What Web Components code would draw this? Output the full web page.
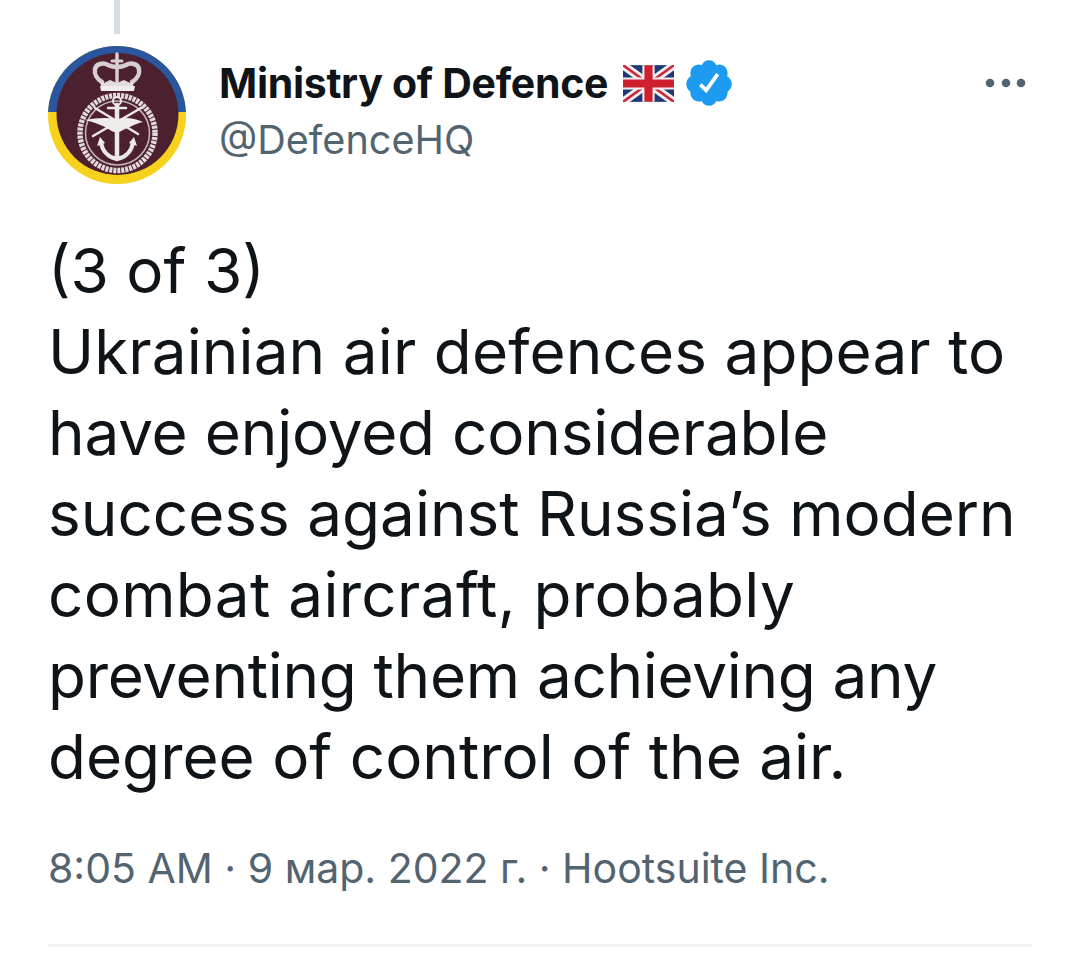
<!DOCTYPE html>
<html>
<head>
<meta charset="utf-8">
<style>
html, body { margin: 0; background: #fff; }
body { font-family: Inter, "Liberation Sans", sans-serif; color: #0f1419; width: 1080px; height: 957px; overflow: hidden; }
</style>
</head>
<body>
<tweet-card>
  <tweet-header name="Ministry of Defence" handle="@DefenceHQ"></tweet-header>
  <tweet-text>
    <tweet-line>(3 of 3)</tweet-line>
    <tweet-line fit="0.1">Ukrainian air defences appear to</tweet-line>
    <tweet-line fit="-0.2">have enjoyed considerable</tweet-line>
    <tweet-line>success against Russia’s modern</tweet-line>
    <tweet-line fit="0.32">combat aircraft, probably</tweet-line>
    <tweet-line fit="-0.31">preventing them achieving any</tweet-line>
    <tweet-line>degree of control of the air.</tweet-line>
  </tweet-text>
  <tweet-meta>8:05 AM · 9 мар. 2022 г. · Hootsuite Inc.</tweet-meta>
</tweet-card>
<script>
class TweetCard extends HTMLElement {
    constructor(){
        super();
        this.attachShadow({ mode: 'open' });
        this.shadowRoot.innerHTML = `
            <style>
                :host { display: block; padding: 0 48px; }
                .thread { width: 6px; height: 34px; background: #d6dee3; margin-left: 66px; }
                .rule { height: 3px; background: #eff3f4; margin-top: 51px; }
            </style>
            <div class="thread"></div>
            <slot></slot>
            <div class="rule"></div>
        `;
    }
}

class TweetHeader extends HTMLElement {
    connectedCallback(){
        this.attachShadow({ mode: 'open' });
        this.shadowRoot.innerHTML = `
            <style>
                :host { display: flex; align-items: flex-start; margin-top: 12px; height: 138px; }
                .avatar { width: 138px; height: 138px; flex: none; display: block; }
                .who { margin-left: 33px; flex: 1; padding-top: 12px; }
                .line { display: flex; align-items: center; height: 50px; }
                .name { font-size: 41px; font-weight: 700; letter-spacing: -0.3px; white-space: nowrap; }
                .flag { width: 51px; height: 37px; margin-left: 15px; display: block; }
                .badge { width: 52px; height: 52px; margin-left: 9px; display: block; }
                .handle { font-size: 39.6px; color: #536471; height: 48px; line-height: 48px; margin-top: 8px; }
                .more { width: 48px; height: 10px; flex: none; margin-top: 32px; display: block; }
            </style>
            <svg class="avatar" viewBox="0 0 138 138">
                <defs><clipPath id="top"><rect width="138" height="66"/></clipPath></defs>
                <circle cx="69" cy="69" r="69" fill="#f6d21c"/>
                <circle cx="69" cy="69" r="69" fill="#2a56a0" clip-path="url(#top)"/>
                <circle cx="69.500" cy="68" r="61" fill="#4d2030"/>
                <!-- crown -->
                <g fill="none" stroke="#d6ced1" stroke-linecap="round">
                    <path d="M69 8v28" stroke-width="3.500"/>
                    <path d="M64 15h10" stroke-width="3"/>
                    <path d="M54 36c-5-3-8-8-7-13 1-5 8-7 13-4 4 2 6 2 9 2s5 0 9-2c5-3 12-1 13 4 1 5-2 10-7 13" stroke-width="4.500"/>
                </g>
                <path d="M52 34l4 3 6-3 7 3 7-3 6 3 4-3-1 6H53z" fill="#e2dcde"/>
                <path d="M52 40h35l-1 5H53z" fill="#f0ecec"/>
                <!-- rope ring -->
                <circle cx="69.500" cy="87" r="37.500" fill="none" stroke="#e0dadc" stroke-width="5.500" stroke-dasharray="3 1"/>
                <circle cx="69.500" cy="87" r="32" fill="none" stroke="#c4b8bb" stroke-width="1.500"/>
                <!-- anchor, swords -->
                <g stroke="#ece8e9" fill="none" stroke-linecap="round">
                    <circle cx="69" cy="55" r="4" stroke-width="2"/>
                    <path d="M60 62h18" stroke-width="2.500"/>
                    <path d="M69 59v54" stroke-width="4.500"/>
                    <path d="M53 97c2 10 9 15 16 16 7-1 14-6 16-16" stroke-width="4"/>
                    <path d="M47 62l43 26M93 62L45 90" stroke-width="2.500"/>
                </g>
                <g fill="#f0ecec">
                    <path d="M37 74c10-2 22-3 32-1 9-2 17-1 26 3-6 1-13 5-20 8-4 3-9 3-13 0-8-5-16-8-25-10z"/>
                    <path d="M49 100l3-9 5 6zM89 100l-3-9-5 6z"/>
                </g>
            </svg>
            <div class="who">
                <div class="line">
                    <span class="name">${this.getAttribute('name')}</span>
                    <svg class="flag" viewBox="0 0 50 36">
                        <rect width="50" height="36" fill="#1f3a72"/>
                        <path d="M0 0l50 36M50 0L0 36" stroke="#f2eef0" stroke-width="8"/>
                        <path d="M0 0l50 36M50 0L0 36" stroke="#c9283a" stroke-width="2.500"/>
                        <path d="M25 0v36M0 18h50" stroke="#f2eef0" stroke-width="12"/>
                        <path d="M25 0v36M0 18h50" stroke="#cf2030" stroke-width="8"/>
                    </svg>
                    <svg class="badge" viewBox="0 0 24 24">
                        <path fill="#1d9bf0" d="M22.500 12.500c0-1.580-.875-2.950-2.148-3.600.154-.435.238-.905.238-1.400 0-2.210-1.710-3.998-3.818-3.998-.470 0-.920.084-1.336.250C14.818 2.415 13.510 1.500 12 1.500s-2.816.917-3.437 2.250c-.415-.165-.866-.250-1.336-.250-2.110 0-3.818 1.790-3.818 4 0 .494.083.964.237 1.400-1.272.650-2.147 2.018-2.147 3.600 0 1.495.782 2.798 1.942 3.486-.020.170-.032.340-.032.514 0 2.210 1.708 4 3.818 4 .470 0 .920-.086 1.335-.250.620 1.334 1.926 2.250 3.437 2.250 1.512 0 2.818-.916 3.437-2.250.415.163.865.248 1.336.248 2.110 0 3.818-1.790 3.818-4 0-.174-.012-.344-.033-.513 1.158-.687 1.943-1.990 1.943-3.484z"/>
                        <path fill="#fff" d="M16.700 8.400l-5.900 8.300-3.400-3.300 1.200-1.300 2 1.900 4.700-6.600z"/>
                    </svg>
                </div>
                <div class="handle">${this.getAttribute('handle')}</div>
            </div>
            <svg class="more" viewBox="0 0 48 10">
                <circle cx="6" cy="5" r="4.300" fill="#536471"/>
                <circle cx="22" cy="5" r="4.300" fill="#536471"/>
                <circle cx="37" cy="5" r="4.300" fill="#536471"/>
            </svg>
        `;
    }
}

class TweetText extends HTMLElement {
    constructor(){
        super();
        this.attachShadow({ mode: 'open' });
        this.shadowRoot.innerHTML = `
            <style>
                :host { display: block; font-size: 62px; line-height: 81px; margin-top: 46px; white-space: nowrap; color: #0f1419; }
            </style>
            <slot></slot>
        `;
    }
}

// one line of the tweet, fit = letter-spacing in px to get the width of the original font
class TweetLine extends HTMLElement {
    connectedCallback(){
        this.attachShadow({ mode: 'open' });
        this.shadowRoot.innerHTML = `
            <style>
                :host { display: block; letter-spacing: ${this.getAttribute('fit') || 0}px; }
            </style>
            <slot></slot>
        `;
    }
}

class TweetMeta extends HTMLElement {
    constructor(){
        super();
        this.attachShadow({ mode: 'open' });
        this.shadowRoot.innerHTML = `
            <style>
                :host { display: block; font-size: 41px; line-height: 50px; margin-top: 46px; color: #536471; white-space: nowrap; }
            </style>
            <slot></slot>
        `;
    }
}

customElements.define('tweet-card', TweetCard);
customElements.define('tweet-header', TweetHeader);
customElements.define('tweet-text', TweetText);
customElements.define('tweet-line', TweetLine);
customElements.define('tweet-meta', TweetMeta);
</script>
</body>
</html>
